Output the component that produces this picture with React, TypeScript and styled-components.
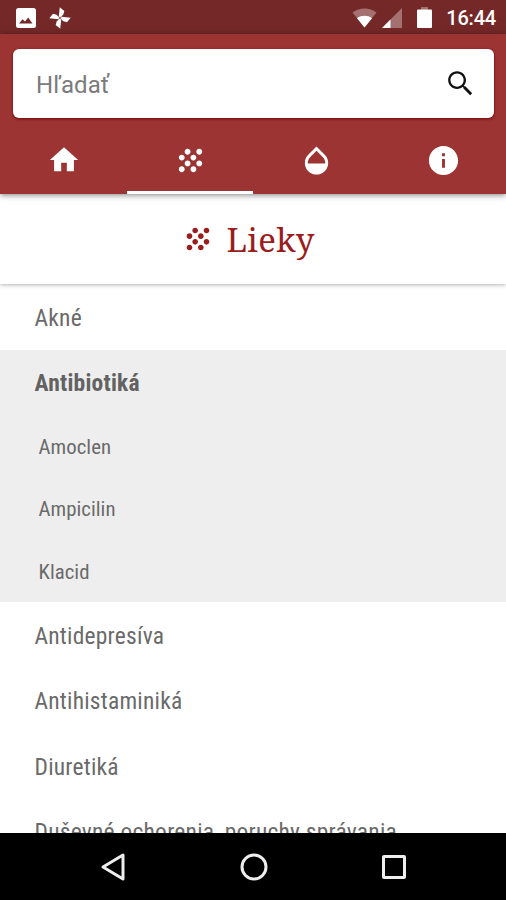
import React from "react";
import styled, { createGlobalStyle } from "styled-components";

const GlobalStyle = createGlobalStyle`
  * { box-sizing: border-box; }
  html, body { margin: 0; padding: 0; }
  body { background: #fff; font-family: Roboto, "Open Sans", sans-serif; overflow: hidden; }
`;

const Screen = styled.div`
  width: 506px;
  height: 900px;
  display: flex;
  flex-direction: column;
  overflow: hidden;
  background: #fff;
`;

const StatusBar = styled.div`
  height: 34px;
  flex: none;
  display: flex;
  align-items: center;
  justify-content: space-between;
  padding: 1px 10px 0 16px;
  background: #752828;
`;

const StatusGroup = styled.div`
  display: flex;
  align-items: center;
`;

const Icon = styled.svg<{ $gap?: number }>`
  display: block;
  flex: none;
  margin-right: ${(p) => p.$gap ?? 0}px;
`;

const Clock = styled.span`
  font-size: 20px;
  line-height: 24px;
  font-weight: 500;
  letter-spacing: -0.2px;
  color: #fff;
  white-space: nowrap;
`;

const AppBar = styled.header`
  position: relative;
  z-index: 2;
  flex: none;
  height: 160px;
  padding-top: 15px;
  display: flex;
  flex-direction: column;
  background: #9b3432;
  box-shadow: 0 1px 6px rgba(0, 0, 0, 0.5);
`;

const SearchBox = styled.div`
  height: 68.5px;
  margin: 0 12px 0 13px;
  padding: 0 17px 0 23px;
  display: flex;
  align-items: center;
  justify-content: space-between;
  border-radius: 6px;
  background: #fff;
  box-shadow: 0 1px 3px rgba(110, 0, 0, 0.9);
`;

const Placeholder = styled.span`
  padding-top: 3px;
  font-size: 24px;
  line-height: 28px;
  letter-spacing: 0.1px;
  color: #7b7b7b;
`;

const Tabs = styled.nav`
  flex: 1;
  display: grid;
  grid-template-columns: repeat(4, 1fr);
`;

const Tab = styled.button<{ $active?: boolean }>`
  border: 0;
  border-bottom: 3px solid ${(p) => (p.$active ? "#fff" : "transparent")};
  padding: 12px 0 0 1px;
  background: none;
  display: flex;
  align-items: center;
  justify-content: center;
  color: #fff;
`;

const TitleBar = styled.div`
  position: relative;
  z-index: 1;
  flex: none;
  height: 90px;
  padding-left: 181px;
  display: flex;
  align-items: center;
  color: #9b1c1c;
  background: #fff;
  box-shadow: 0 1px 4px rgba(0, 0, 0, 0.3);
`;

const Title = styled.h1`
  margin: 2px 0 0 11.5px;
  font-family: "Noto Serif", "DejaVu Serif Condensed", "DejaVu Serif", serif;
  font-size: 33px;
  letter-spacing: 0.3px;
  font-weight: 400;
  line-height: 44px;
`;

const List = styled.main`
  flex: 1;
  min-height: 0;
  overflow: hidden;
  font-family: "Roboto Condensed", Roboto, sans-serif;
  font-stretch: 75%;
  color: #6a6a6a;
`;

const Row = styled.div<{ $strong?: boolean }>`
  height: 65.6px;
  padding: 2px 0 0 34.5px;
  display: flex;
  align-items: center;
  font-size: 23.5px;
  letter-spacing: 0.22px;
  white-space: nowrap;
  font-weight: ${(p) => (p.$strong ? 700 : 400)};
  color: ${(p) => (p.$strong ? "#626262" : "inherit")};
`;

const Group = styled.section`
  background: #eee;
`;

const SubRow = styled.div`
  height: 62.2px;
  padding: 2px 0 0 38.5px;
  display: flex;
  align-items: center;
  font-size: 20.8px;
  letter-spacing: 0.04px;
  white-space: nowrap;
`;

const NavBar = styled.footer`
  flex: none;
  height: 67px;
  display: flex;
  align-items: center;
  justify-content: space-between;
  padding: 0 99px 0 99px;
  background: #000;
`;

const GrainIcon = ({ size }: { size: number }) => (
  <Icon width={size} height={size} viewBox="0 0 24 24" fill="currentColor">
    <path d="M10 12c-1.1 0-2 .9-2 2s.9 2 2 2 2-.9 2-2-.9-2-2-2zM6 8c-1.1 0-2 .9-2 2s.9 2 2 2 2-.9 2-2-.9-2-2-2zm0 8c-1.1 0-2 .9-2 2s.9 2 2 2 2-.9 2-2-.9-2-2-2zm12-8c1.1 0 2-.9 2-2s-.9-2-2-2-2 .9-2 2 .9 2 2 2zm-4 8c-1.1 0-2 .9-2 2s.9 2 2 2 2-.9 2-2-.9-2-2-2zm4-4c-1.1 0-2 .9-2 2s.9 2 2 2 2-.9 2-2-.9-2-2-2zm-4-4c-1.1 0-2 .9-2 2s.9 2 2 2 2-.9 2-2-.9-2-2-2zm-4-4c-1.1 0-2 .9-2 2s.9 2 2 2 2-.9 2-2-.9-2-2-2z" />
  </Icon>
);

const blade = "M10.800 0.300L15.300 4 14.300 7.500 11.500 10.500 9.800 9.500z";

export default function App() {
  return (
    <>
      <GlobalStyle />
      <Screen>
        <StatusBar>
          <StatusGroup>
            <Icon $gap={13} width="20" height="20" viewBox="0 0 20 20">
              <rect x="0" y="0" width="20" height="20" rx="2.5" fill="#fff" />
              <path d="M3 15.500L6.500 11.200 9 13.500 12.200 9.500 16.500 15.500z" fill="#752828" />
            </Icon>
            <Icon width="22" height="22" viewBox="0 0 22 22" fill="#fff">
              <path d={blade} />
              <path d={blade} transform="rotate(90 11 11)" />
              <path d={blade} transform="rotate(180 11 11)" />
              <path d={blade} transform="rotate(270 11 11)" />
              <circle cx="11" cy="11" r="1.3" fill="#a47070" />
            </Icon>
          </StatusGroup>
          <StatusGroup>
            <Icon $gap={5} width="25" height="20" viewBox="0 0 25 20">
              <path d="M0.500 4.500C7.500-1 17.500-1 24.500 4.500L12.500 19.500z" fill="#a47070" />
              <path d="M5 10.200C9.500 7 15.500 7 20 10.200L12.500 19.500z" fill="#fff" />
            </Icon>
            <Icon $gap={15} width="20" height="20" viewBox="0 0 20 20">
              <path d="M20 0V20H0z" fill="#a47070" />
              <path d="M8.500 11.500V20H0z" fill="#fff" />
            </Icon>
            <Icon $gap={14.5} width="15" height="21" viewBox="0 0 15 21">
              <rect x="4" y="0" width="7" height="3" fill="#a47070" />
              <rect x="0" y="2.500" width="15" height="18.500" rx="1" fill="#fff" />
            </Icon>
            <Clock>16:44</Clock>
          </StatusGroup>
        </StatusBar>

        <AppBar>
          <SearchBox>
            <Placeholder>Hľadať</Placeholder>
            <Icon width="33" height="33" viewBox="0 0 24 24" fill="#111">
              <path d="M15.500 14h-.79l-.28-.27C15.410 12.590 16 11.110 16 9.500 16 5.910 13.090 3 9.500 3S3 5.910 3 9.500 5.910 16 9.500 16c1.610 0 3.090-.59 4.230-1.570l.27.28v.79l5 4.990L20.490 19l-4.990-5zm-6 0.300C6.850 14.300 4.700 12.150 4.700 9.500S6.850 4.700 9.500 4.700 14.300 6.850 14.300 9.500 12.150 14.300 9.500 14.300z" />
            </Icon>
          </SearchBox>
          <Tabs>
            <Tab>
              <Icon width="34" height="34" viewBox="0 0 24 24" fill="currentColor">
                <path d="M10 20v-6h4v6h5v-8h3L12 3 2 12h3v8z" />
              </Icon>
            </Tab>
            <Tab $active>
              <GrainIcon size={35} />
            </Tab>
            <Tab>
              <Icon width="35" height="35" viewBox="0 0 24 24" fill="currentColor">
                <path d="M17.660 8L12 2.350 6.340 8C4.780 9.560 4 11.640 4 13.640s.78 4.110 2.340 5.670 3.610 2.350 5.660 2.350 4.100-.79 5.660-2.350S20 15.640 20 13.640 19.220 9.560 17.660 8zM6 14c.01-2 .62-3.270 1.760-4.400L12 5.270l4.240 4.380C17.380 10.770 17.990 12 18 14H6z" />
              </Icon>
            </Tab>
            <Tab>
              <Icon width="35" height="35" viewBox="0 0 24 24" fill="currentColor">
                <path d="M12 2C6.480 2 2 6.480 2 12s4.480 10 10 10 10-4.480 10-10S17.520 2 12 2zm1 15h-2v-6h2v6zm0-8h-2V7h2v2z" />
              </Icon>
            </Tab>
          </Tabs>
        </AppBar>

        <TitleBar>
          <GrainIcon size={34} />
          <Title>Lieky</Title>
        </TitleBar>

        <List>
          <Row>Akné</Row>
          <Group>
            <Row $strong>Antibiotiká</Row>
            <SubRow>Amoclen</SubRow>
            <SubRow>Ampicilin</SubRow>
            <SubRow>Klacid</SubRow>
          </Group>
          <Row>Antidepresíva</Row>
          <Row>Antihistaminiká</Row>
          <Row>Diuretiká</Row>
          <Row>Duševné ochorenia, poruchy správania</Row>
        </List>

        <NavBar>
          <Icon width="27" height="30" viewBox="0 0 27 30" fill="none" stroke="#eee" strokeWidth="3" strokeLinejoin="round">
            <path d="M4 15L24 3V27z" />
          </Icon>
          <Icon width="28" height="28" viewBox="0 0 28 28" fill="none" stroke="#eee" strokeWidth="3">
            <circle cx="14" cy="14" r="12" />
          </Icon>
          <Icon width="26" height="26" viewBox="0 0 26 26" fill="none" stroke="#eee" strokeWidth="3">
            <rect x="2.500" y="2.500" width="21" height="21" rx="0.500" />
          </Icon>
        </NavBar>
      </Screen>
    </>
  );
}
